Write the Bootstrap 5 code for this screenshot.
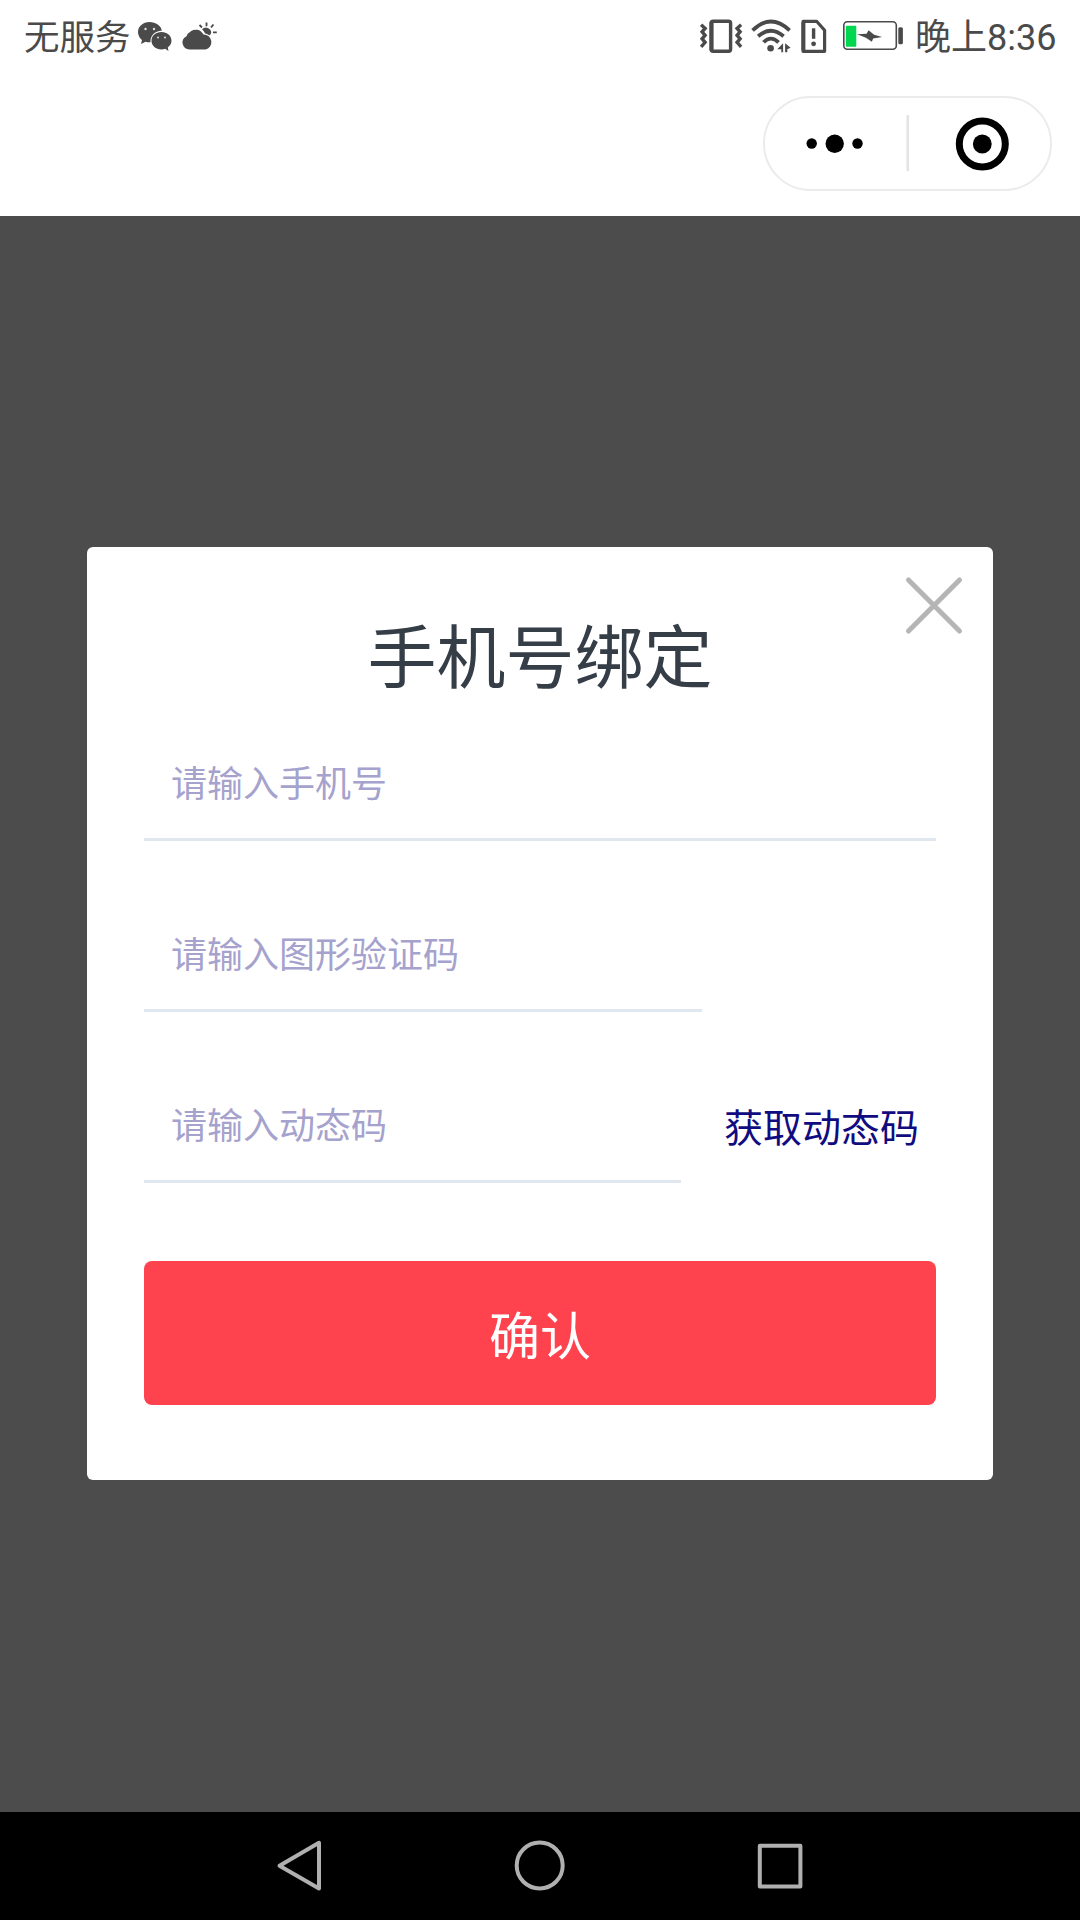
<!DOCTYPE html>
<html lang="zh-CN">
<head>
<meta charset="utf-8">
<meta name="viewport" content="width=device-width, initial-scale=1">
<title>手机号绑定</title>
<link href="https://cdn.jsdelivr.net/npm/bootstrap@5.3.0/dist/css/bootstrap.min.css" rel="stylesheet">
<style>
  body { font-family: Roboto, "Noto Sans CJK SC", sans-serif; background: #4c4c4c; }
  .screen { width: 1080px; height: 1920px; }
  .statusbar { height: 72px; padding: 0 25px 0 24px; color: #4a4a4a; font-size: 35.5px; line-height: 76px; }
  .service-label { width: 109px; }
  .clock-label { width: 140px; font-size: 36px; }
  .titlebar { height: 144px; padding: 24px 28px 0 0; }
  .capsule { width: 289px; height: 95px; border: 2px solid #ebebeb; border-radius: 48px; }
  .overlay-area { background: #4c4c4c; padding: 331px 87px 0; }
  .bind-card { height: 933px; border-radius: 6px; padding: 0 57px; }
  .bind-title { font-size: 69px; line-height: 100px; margin: 63px 0 17px; color: #353d47; font-weight: 400; }
  .close-btn { top: 25px; right: 26px; width: 66px; height: 66px; }
  .line-input, .line-input:focus { height: 114px; padding: 4px 27px 0; border: 0; border-bottom: 3px solid #e0e7ef; border-radius: 0; background: none; box-shadow: none; font-size: 36px; line-height: 54px; }
  .line-input::placeholder { color: #a5a2cd; opacity: 1; }
  .field-row { height: 114px; margin-bottom: 57px; }
  .field-captcha { width: 558px; }
  .field-code { width: 537px; }
  .code-btn { font-size: 39px; line-height: 58px; color: #100c80; margin: 6px 0 0 43px; }
  .confirm-btn { height: 144px; font-size: 51px; color: #fff; background: #fe434f; border-radius: 8px; margin-top: 78px; padding: 10px 0 0; }
  .sysnav { height: 108px; }
</style>
</head>
<body>
<div class="screen d-flex flex-column overflow-hidden">
  <header class="bg-white">
    <div class="statusbar d-flex justify-content-between">
      <div class="d-flex">
        <span class="service-label text-nowrap">无服务</span>
        <svg width="90" height="72" viewBox="132.5 0 90 72" fill="#4a4a4a">
          <path d="M149 22c-6.500 0-11.500 4.500-11.500 10 0 3.300 1.600 6.100 4 8l-1 4 4.500-2.300c1.500.5 3 .7 5 .6-.6-6 4-11.200 11.400-11.700C160.300 25.500 155.500 22 149 22z"/>
          <path d="M161 32c-5.800 0-10 3.900-10 8.700s4.200 8.700 10 8.700c1.400 0 2.500-.2 3.600-.6l3.400 2.100-.7-3.500c2.300-1.600 3.700-4 3.700-6.700 0-4.800-4.300-8.700-10-8.700z"/>
          <g fill="#ddd"><circle cx="145" cy="29" r="1.200"/><circle cx="153.500" cy="29" r="1.200"/><circle cx="157.500" cy="37.500" r="1"/><circle cx="164.500" cy="37.500" r="1"/></g>
          <path d="M189 49.500a7 7 0 0 1-3-13.300 6 6 0 0 1 3.500-4.200 8.500 8.500 0 0 1 13.500 2.500 7.600 7.600 0 0 1 2 15z"/>
          <path d="M201.500 29.500a5.300 5.300 0 0 1 9.300 3 5 5 0 0 1-2 3c-1-1-2.500-1.800-4.300-2-.8-2-1.500-3-3-4z"/>
          <path d="M206 22.500v3.800M199 25l2.500 2.500M213 24.500l-2.500 2.800M212.500 32.300h3.800" stroke="#4a4a4a" stroke-width="1.800"/>
        </svg>
      </div>
      <div class="d-flex">
        <svg width="216" height="72" viewBox="699.4 -0.3 216 72" fill="none" stroke="#4a4a4a">
          <rect x="711.500" y="21" width="19.500" height="30" rx="2" stroke-width="3.400"/><path d="M712 22v28" stroke-width="4"/>
          <path d="M701.500 24.500l4 3.500-3 3.500 3 3.500-3 3.500 3 3.500-4 4.500M741.500 24.500l-4 3.500 3 3.500-3 3.500 3 3.500-3 3.500 4 4.500" stroke-width="3.400"/>
          <path d="M753 30q18-17.500 37 0M758.500 36q12.500-11 25.500 0M764 42q7-7.500 15 0" stroke-width="3.800"/>
          <circle cx="771" cy="48" r="3.300" fill="#4a4a4a" stroke="none"/>
          <path d="M783.500 43v9h-1.800v-3h-4zM785.500 43l5.500 4.500-3.300 1.500v3h-2.200z" fill="#4a4a4a" stroke="none"/>
          <path d="M803.500 21h13.500l8 9v21h-21.500z" stroke-width="3.200" stroke-linejoin="round"/><path d="M803.800 22v28" stroke-width="4"/>
          <path d="M814 28v10.500" stroke-width="3.400"/><circle cx="814" cy="43.500" r="2.400" fill="#4a4a4a" stroke="none"/>
          <rect x="844.200" y="21.500" width="52.500" height="27.500" rx="3.500" stroke-width="1.600"/>
          <rect x="846.200" y="25.500" width="10.500" height="21" rx="1" fill="#00d64f" stroke="none"/>
          <path d="M857.500 34l9.500-.5 2-3.500 5.500 4.500 8 2.300-9 1.500-1.200 3.200-6-4z" fill="#4a4a4a" stroke="none"/>
          <rect x="898.700" y="27" width="4.600" height="17" rx="1.500" fill="#4a4a4a" stroke="none"/>
        </svg>
        <span class="clock-label text-nowrap">晚上8:36</span>
      </div>
    </div>
    <div class="titlebar d-flex justify-content-end">
      <div class="capsule d-flex align-items-center">
        <svg width="285" height="91" viewBox="765 98 285 91">
          <circle cx="811.700" cy="143.500" r="5.200"/><circle cx="834.700" cy="143.700" r="9.200"/><circle cx="857.500" cy="143.500" r="5.200"/>
          <path d="M907.700 115v56" stroke="#e3e3e3" stroke-width="2.500"/>
          <circle cx="982.300" cy="144" r="23" fill="none" stroke="#000" stroke-width="7"/><circle cx="982.300" cy="144" r="9.400"/>
        </svg>
      </div>
    </div>
  </header>

  <main class="overlay-area flex-grow-1">
    <section class="bind-card bg-white position-relative overflow-hidden">
      <button type="button" class="close-btn btn p-0 border-0 position-absolute d-flex" aria-label="关闭">
        <svg width="66" height="66" viewBox="0 0 66 66"><path d="M7.500 8l51 51M58.500 8l-51 51" stroke="#b5b5b5" stroke-width="5" stroke-linecap="round"/></svg>
      </button>
      <h1 class="bind-title text-center">手机号绑定</h1>
      <form>
        <div class="field-row d-flex">
          <input type="tel" class="form-control line-input" placeholder="请输入手机号">
        </div>
        <div class="field-row d-flex">
          <input type="text" class="form-control line-input field-captcha" placeholder="请输入图形验证码">
        </div>
        <div class="field-row d-flex align-items-center mb-0">
          <input type="text" class="form-control line-input field-code" placeholder="请输入动态码">
          <button type="button" class="code-btn btn p-0 border-0 text-nowrap">获取动态码</button>
        </div>
        <button type="button" class="confirm-btn btn border-0 w-100">确认</button>
      </form>
    </section>
  </main>

  <nav class="sysnav bg-black">
    <svg class="d-block" width="1080" height="108" viewBox="0 1812 1080 108" fill="none" stroke="#b0b0b0" stroke-width="4" stroke-linejoin="round">
      <path d="M279.500 1865.700L319 1842.800v45.800z"/>
      <circle cx="539.700" cy="1865.500" r="23"/>
      <rect x="759.800" y="1845.800" width="40.600" height="40.600"/>
    </svg>
  </nav>
</div>
<script src="https://cdn.jsdelivr.net/npm/bootstrap@5.3.0/dist/js/bootstrap.bundle.min.js"></script>
</body>
</html>
